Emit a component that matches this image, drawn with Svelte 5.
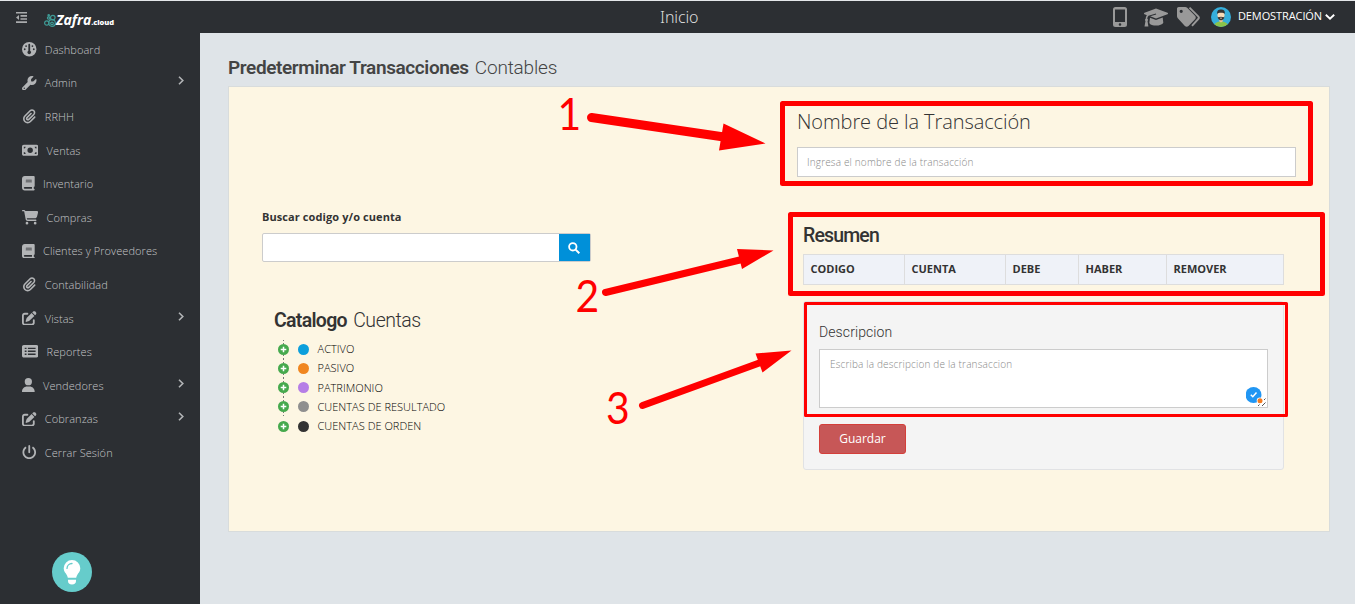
<script lang="ts">
  const paths: Record<string, string> = {
    gauge: 'M256 0a256 256 0 1 0 0 512 256 256 0 1 0 0-512zM288 96v212a64 64 0 1 1-64 0V96a32 32 0 0 1 64 0zM144 112a32 32 0 1 1 0 64 32 32 0 1 1 0-64zM96 224a32 32 0 1 1 0 64 32 32 0 1 1 0-64zM416 224a32 32 0 1 1 0 64 32 32 0 1 1 0-64zM368 112a32 32 0 1 1 0 64 32 32 0 1 1 0-64z',
    wrench: 'M352 320c88.4 0 160-71.6 160-160c0-15.3-2.2-30.1-6.2-44.2c-3.1-10.8-16.4-13.2-24.3-5.3l-76.8 76.8c-3 3-7.1 4.7-11.3 4.7H336c-8.8 0-16-7.2-16-16V118.6c0-4.2 1.7-8.3 4.7-11.3l76.8-76.8c7.9-7.9 5.4-21.2-5.3-24.3C382.1 2.2 367.3 0 352 0C263.6 0 192 71.6 192 160c0 19.1 3.4 37.5 9.5 54.5L19.9 396.1C7.2 408.8 0 426.1 0 444.1C0 481.6 30.4 512 67.9 512c18 0 35.3-7.2 48-19.9L297.5 310.5c17 6.2 35.4 9.5 54.5 9.500zM80 408a24 24 0 1 1 0 48 24 24 0 1 1 0-48z',
    clip: 'M396.2 83.8c-24.4-24.4-64-24.4-88.4 0l-184 184c-42.1 42.1-42.1 110.3 0 152.4s110.3 42.1 152.4 0l152-152c10.9-10.9 28.7-10.9 39.6 0s10.9 28.7 0 39.6l-152 152c-64 64-167.6 64-231.6 0s-64-167.6 0-231.6l184-184c46.3-46.3 121.3-46.3 167.6 0s46.3 121.3 0 167.6l-176 176c-28.6 28.6-75 28.6-103.6 0s-28.6-75 0-103.6l144-144c10.9-10.9 28.7-10.9 39.6 0s10.9 28.7 0 39.6l-144 144c-6.7 6.7-6.7 17.7 0 24.4s17.7 6.7 24.4 0l176-176c24.4-24.4 24.4-64 0-88.4z',
    money: 'M64 64C29 64 0 93 0 128v256c0 35 29 64 64 64h448c35 0 64-29 64-64V128c0-35-29-64-64-64zM64 320c35 0 64 29 64 64H64zM64 192v-64h64c0 35-29 64-64 64zM448 384c0-35 29-64 64-64v64zM512 192c-35 0-64-29-64-64h64zM288 160a96 96 0 1 1 0 192 96 96 0 1 1 0-192z',
    book: 'M96 0C43 0 0 43 0 96V416c0 53 43 96 96 96H384h32c17.7 0 32-14.3 32-32s-14.3-32-32-32V384c17.7 0 32-14.3 32-32V32c0-17.7-14.3-32-32-32H384 96zm0 384H352v64H96c-17.7 0-32-14.3-32-32s14.3-32 32-32zm32-240c0-8.8 7.2-16 16-16H336c8.8 0 16 7.2 16 16s-7.2 16-16 16H144c-8.8 0-16-7.2-16-16zm16 48H336c8.8 0 16 7.2 16 16s-7.2 16-16 16H144c-8.8 0-16-7.2-16-16s7.2-16 16-16z',
    cart: 'M0 24C0 10.7 10.7 0 24 0H69.5c22 0 41.5 12.8 50.6 32h411c26.3 0 45.5 25 38.6 50.4l-41 152.3c-8.5 31.4-37 53.3-69.5 53.3H170.7l5.4 28.5c2.2 11.3 12.1 19.5 23.6 19.5H488c13.3 0 24 10.7 24 24s-10.7 24-24 24H199.7c-34.6 0-64.3-24.6-70.7-58.5L77.4 54.5c-.7-3.8-4-6.5-7.9-6.5H24C10.7 48 0 37.3 0 24zM128 464a48 48 0 1 1 96 0 48 48 0 1 1 -96 0zm336-48a48 48 0 1 1 0 96 48 48 0 1 1 0-96z',
    edit: 'M471.6 21.7c-21.9-21.9-57.3-21.9-79.2 0L362.3 51.7l97.9 97.9 30.1-30.1c21.9-21.9 21.9-57.3 0-79.2L471.6 21.7zm-299.2 220c-6.1 6.1-10.8 13.6-13.5 21.9l-29.6 88.8c-2.9 8.6-.6 18.1 5.8 24.6s15.9 8.7 24.6 5.8l88.8-29.6c8.2-2.7 15.7-7.4 21.9-13.5L437.7 172.3 339.7 74.3 172.4 241.7zM96 64C43 64 0 107 0 160V416c0 53 43 96 96 96H352c53 0 96-43 96-96V320c0-17.7-14.3-32-32-32s-32 14.3-32 32v96c0 17.7-14.3 32-32 32H96c-17.7 0-32-14.3-32-32V160c0-17.7 14.3-32 32-32h96c17.7 0 32-14.3 32-32s-14.3-32-32-32H96z',
    list: 'M64 32C29 32 0 61 0 96v320c0 35 29 64 64 64h448c35 0 64-29 64-64V96c0-35-29-64-64-64zM96 128h64v48H96zM96 232h64v48H96zM96 336h64v48H96zM208 128h272v48H208zM208 232h272v48H208zM208 336h272v48H208z',
    user: 'M224 256A128 128 0 1 0 224 0a128 128 0 1 0 0 256zm-45.7 48C79.8 304 0 383.8 0 482.3C0 498.7 13.3 512 29.7 512H418.3c16.4 0 29.7-13.3 29.7-29.7C448 383.8 368.2 304 269.7 304H178.3z',
    power: 'M288 32c0-17.7-14.3-32-32-32s-32 14.3-32 32V256c0 17.7 14.3 32 32 32s32-14.3 32-32V32zM143.5 120.6c13.6-11.3 15.4-31.5 4.1-45.1s-31.5-15.4-45.1-4.1C49.7 115.4 16 181.8 16 256c0 132.5 107.5 240 240 240s240-107.5 240-240c0-74.2-33.8-140.6-86.6-184.6c-13.6-11.3-33.8-9.4-45.1 4.1s-9.4 33.8 4.1 45.1c38.9 32.3 63.5 81 63.5 135.4c0 97.2-78.8 176-176 176s-176-78.8-176-176c0-54.4 24.7-103.1 63.5-135.4z'
  };

  const menu = [
    { label: 'Dashboard', icon: 'gauge', w: 512 },
    { label: 'Admin', icon: 'wrench', w: 512, sub: true },
    { label: 'RRHH', icon: 'clip', w: 512 },
    { label: 'Ventas', icon: 'money', w: 576 },
    { label: 'Inventario', icon: 'book', w: 448 },
    { label: 'Compras', icon: 'cart', w: 576 },
    { label: 'Clientes y Proveedores', icon: 'book', w: 448 },
    { label: 'Contabilidad', icon: 'clip', w: 512 },
    { label: 'Vistas', icon: 'edit', w: 512, sub: true },
    { label: 'Reportes', icon: 'list', w: 576 },
    { label: 'Vendedores', icon: 'user', w: 448, sub: true },
    { label: 'Cobranzas', icon: 'edit', w: 512, sub: true },
    { label: 'Cerrar Sesión', icon: 'power', w: 512 }
  ];

  const accounts = [
    { name: 'ACTIVO', color: '#0c9fdc' },
    { name: 'PASIVO', color: '#f0861f' },
    { name: 'PATRIMONIO', color: '#b67ee6' },
    { name: 'CUENTAS DE RESULTADO', color: '#8f8f8f' },
    { name: 'CUENTAS DE ORDEN', color: '#333' }
  ];

  const columns = ['CODIGO', 'CUENTA', 'DEBE', 'HABER', 'REMOVER'];
</script>

<div class="app">
  <header>
    <svg class="collapse" width="11" height="11" viewBox="0 0 11 11" fill="#a9abad">
      <path d="M0 0h11v1.6H0zM4.5 3.1H11v1.6H4.5zM4.5 6.2H11v1.6H4.5zM0 9.3h11v1.6H0zM3 3v5L0 5.5z" />
    </svg>
    <div class="logo">
      <svg width="12" height="14" viewBox="0 0 12 14" fill="none" stroke="#3f9c97" stroke-width="1.2">
        <circle cx="2.8" cy="9" r="2.2" /><circle cx="8" cy="9" r="3.3" /><circle cx="8.8" cy="3.6" r="2.3" /><circle cx="4.6" cy="4" r="1.2" /><circle cx="4.7" cy="1.4" r=".7" /><circle cx="8" cy="9.4" r="1.3" />
      </svg>
      <b>Zafra</b><small>.cloud</small>
    </div>
    <h1>Inicio</h1>
    <div class="tools">
      <svg width="14" height="20" viewBox="0 0 14 20"><path fill="#999" fill-rule="evenodd" d="M2.5 0h9A2.5 2.5 0 0 1 14 2.5v15a2.5 2.5 0 0 1-2.5 2.5h-9A2.5 2.5 0 0 1 0 17.500v-15A2.500 2.500 0 0 1 2.500 0zM2 2.500v12.500h10V2.500zM7 16.200a1.300 1.300 0 1 0 0 2.600 1.300 1.300 0 1 0 0-2.600z" /></svg>
      <svg width="24" height="19" viewBox="0 0 24 19" fill="#999"><path d="M12 0.500 23.500 4.700c.7.300.7 1.200 0 1.500L12 10.400 6.200 8.300l6-1.800-.3-.9L4.500 7.700C3.700 8.500 3.400 9.500 3.300 10.800c1 .6.900 1.800.2 2.300l.9 5.400H.5l1-5.400c-.7-.6-.7-1.700.2-2.300.1-1.400.4-2.700 1.200-3.600L.5 6.200c-.7-.3-.7-1.200 0-1.500z" /><path d="M6 9.800l6 2.200 6.700-2.400.6 5.200c-1.600 3.700-12.500 3.700-14 .2z" /></svg>
      <svg width="24" height="20" viewBox="0 0 24 20"><path fill="#999" fill-rule="evenodd" d="M0 1.700C0 .8.700 0 1.700 0h6.500c.8 0 1.500.3 2 .8l7.800 8c1 1 1 2.500 0 3.500l-6.500 6.800c-1 1-2.600 1-3.600 0L.8 11.300c-.5-.5-.8-1.200-.8-2zM4.200 2.700a1.600 1.600 0 1 0 0 3.200 1.600 1.600 0 1 0 0-3.200z" /><path d="M12.500.7l8.700 8.700c.8.800.8 1.800 0 2.600L15 18.800" fill="none" stroke="#999" stroke-width="1.900" /></svg>
      <svg class="avatar" width="20" height="20" viewBox="0 0 20 20">
        <defs><clipPath id="face"><circle cx="10" cy="10" r="10" /></clipPath></defs>
        <g clip-path="url(#face)"><path fill="#35aedb" d="M0 0h20v20H0z" /><ellipse cx="10" cy="19.500" rx="7.500" ry="5" fill="#8bc34a" /><path fill="#e9bd91" d="M8.300 11h3.400v3.500l-1.700 1-1.700-1z" /><ellipse cx="10" cy="8.200" rx="3.500" ry="4.500" fill="#f8d9b6" /><path fill="#333" d="M6.300 7C5.500 3.800 7.500 2.400 10 2.400s4.500 1.400 3.700 4.600C13 5.200 7 5.200 6.300 7zM6.600 9.500c1 1.400 2 .2 3.400.2s2.400 1.200 3.400-.2c0 5-6.800 5-6.800 0z" /><path fill="#f8d9b6" d="M9 10.700h2v.7H9z" /></g>
      </svg>
      <span class="who">DEMOSTRACIÓN</span>
      <svg width="10" height="6" viewBox="0 0 10 6"><path d="M.8.800 5 4.700 9.200.800" fill="none" stroke="#fff" stroke-width="1.900" /></svg>
    </div>
  </header>

  <div class="body">
    <nav>
      {#each menu as item}
        <a class="item">
          <svg height="14.500" width={(item.w / 512) * 14.5} viewBox="0 0 {item.w} 512"><path fill-rule="evenodd" fill="#b2b4b6" d={paths[item.icon]} /></svg>
          <span>{item.label}</span>
          {#if item.sub}
            <svg class="chev" width="6" height="9" viewBox="0 0 6 9"><path d="M1 .8l3.800 3.700L1 8.200" fill="none" stroke="#b2b4b6" stroke-width="1.600" /></svg>
          {/if}
        </a>
      {/each}
      <button class="tip" aria-label="Ayuda">
        <svg width="18" height="25" viewBox="0 0 18 25"><path fill="#fff" d="M9 0a8.300 8.300 0 0 1 8.300 8.300c0 3.400-2 4.700-3.200 6.900-.5.900-.7 1.600-.9 2.600H4.800c-.2-1-.4-1.700-.9-2.600C2.700 13 .7 11.700.7 8.300A8.300 8.300 0 0 1 9 0zM5 19.800h8v1.300a4 3.400 0 0 1-8 0z" /><path d="M4 8.400a5 5 0 0 1 5-4.900" fill="none" stroke="#66cccb" stroke-width="1.300" stroke-linecap="round" /></svg>
      </button>
    </nav>

    <main>
      <h2 class="page-title"><b>Predeterminar Transacciones</b> <span>Contables</span></h2>
      <section class="panel">
        <div class="left">
          <label class="search-label" for="search">Buscar codigo y/o cuenta</label>
          <div class="search">
            <input id="search" />
            <button aria-label="Buscar"><svg width="12" height="12" viewBox="0 0 12 12" fill="none" stroke="#fff"><circle cx="4.800" cy="4.800" r="3.700" stroke-width="1.800" /><path d="M7.600 7.600l3.700 3.700" stroke-width="2" /></svg></button>
          </div>
          <h2 class="catalog"><b>Catalogo</b> <span>Cuentas</span></h2>
          <ul>
            {#each accounts as account}
              <li>
                <svg class="plus" width="11" height="11" viewBox="0 0 11 11"><circle cx="5.500" cy="5.500" r="5.500" fill="#46a94d" /><path d="M5.500 2.700v5.600M2.700 5.500h5.600" stroke="#fff" stroke-width="1.500" /></svg>
                <i style="background:{account.color}"></i>
                <span>{account.name}</span>
              </li>
            {/each}
          </ul>
        </div>
        <div class="right">
          <h2 class="name">Nombre de la Transacción</h2>
          <input class="name-input" placeholder="Ingresa el nombre de la transacción" />
          <div class="summary">
            <h3>Resumen</h3>
            <table>
              <thead><tr>{#each columns as column}<th>{column}</th>{/each}</tr></thead>
            </table>
            <div class="card">
              <h4>Descripcion</h4>
              <div class="area">
                <textarea placeholder="Escriba la descripcion de la transaccion"></textarea>
                <svg class="checker" width="21" height="20" viewBox="0 0 21 20">
                  <circle cx="7.500" cy="8" r="8" fill="#2196f3" /><path d="M4.800 7.700l2 2 3.700-4.200" fill="none" stroke="#fff" stroke-width="1.500" /><circle cx="14" cy="13.700" r="3.300" fill="#fff" /><circle cx="14" cy="13.700" r="2.500" fill="#f47b20" /><path d="M12 19l1.500-1.500M16 19l3.500-3.500M18 13l1.500-1.500" stroke="#555" stroke-width="1" />
                </svg>
              </div>
              <button class="save">Guardar</button>
            </div>
          </div>
        </div>
      </section>
    </main>
  </div>

  <svg class="notes" width="1355" height="604" viewBox="0 0 1355 604">
    <g fill="none" stroke="#f00" stroke-linejoin="round">
      <rect x="782.500" y="103.500" width="528" height="80" stroke-width="5" />
      <rect x="790.500" y="214.500" width="532" height="79" stroke-width="5" />
      <rect x="805.500" y="303.500" width="481" height="112" stroke-width="3" />
    </g>
    <g stroke="#f00" stroke-linecap="round">
      <path d="M591.500 117.500 724 137" stroke-width="9" />
      <path d="M605.500 292.500 744 259" stroke-width="7" />
      <path d="M642.500 405.500 762 362" stroke-width="7" />
    </g>
    <path fill="#f00" d="M723.500 123.500 765.500 143.500 719 150.500zM737 249l36.500 1.500-31.500 18.500zM755.500 353.500 791.500 350.500 762.500 372.500z" />
    <g class="digits" fill="#f00"><text transform="translate(557.500 130) scale(.93 1)">1</text><text transform="translate(575.500 312) scale(.93 1.030)">2</text><text transform="translate(606 424) scale(.93 1.030)">3</text></g>
  </svg>
</div>

<style>
  :global(body) { margin: 0; overflow: hidden; }
  * { box-sizing: border-box; }
  .app { position: relative; width: 1355px; height: 604px; display: flex; flex-direction: column; background: #dfe4e8; font-family: 'Open Sans', sans-serif; color: #333; overflow: hidden; }
  h1, h2, h3, h4, ul { margin: 0; padding: 0; font-weight: 300; }
  button { border: 0; padding: 0; }
  svg { flex: none; }
  header { height: 33px; flex: none; border-top: 1px solid #e4e7ea; background: #2c2f33; display: grid; grid-template-columns: 44px 616px 1fr auto; align-items: center; }
  .collapse { margin: 0 0 0 16px; }
  .logo { display: flex; align-items: baseline; color: #fff; padding-top: 6px; height: 28px; }
  .logo svg { align-self: flex-start; margin-top: 5px; }
  .logo b { font: italic 700 14px/20px 'Open Sans', sans-serif; padding-top: 1px; }
  .logo small { font: 800 7.500px/20px 'Open Sans', sans-serif; letter-spacing: -0.100px; }
  h1 { font: 300 16px/32px 'Noto Sans', sans-serif; color: #ddd; letter-spacing: -0.100px; }
  .tools { display: flex; align-items: center; padding-right: 20px; }
  .tools svg:nth-child(2) { margin-left: 17px; }
  .tools svg:nth-child(3) { margin-left: 9px; }
  .tools .avatar { margin-left: 10px; }
  .who { color: #fff; font-size: 11px; letter-spacing: -0.100px; margin: 0 3px 3px 7px; }
  .body { display: flex; flex: 1; }
  nav { width: 200px; background: #2c2f33; display: flex; flex-direction: column; }
  .item { height: 33.600px; flex: none; display: flex; align-items: center; padding: 0 16px 0 22px; color: #c4c6c8; font-size: 11px; letter-spacing: .070px; font-weight: 300; gap: 8.300px; }
  .item > svg:first-child { margin-bottom: 1px; }
  .item span { padding-bottom: 1px; }
  .chev { margin-left: auto; margin-bottom: 5px; }
  .tip { width: 40px; height: 40px; border-radius: 50%; background: #66cccb; margin: auto 0 12px 52px; display: grid; place-items: center; }
  main { flex: 1; padding: 22px 25px 0 28px; }
  .page-title { height: 31px; font: 300 19px/25px Roboto, sans-serif; color: #444; white-space: nowrap; }
  .page-title b { letter-spacing: -0.390px; }
  .page-title span { letter-spacing: -0.200px; margin-left: 1.500px; }
  .page-title b, .catalog b { font-weight: 600; }
  .panel { width: 1102px; height: 446px; background: #fdf6e3; border: 1px solid #d8dcdc; display: flex; }
  .left { width: 568px; padding: 121px 0 0 33px; }
  .search-label { display: block; font-size: 11px; font-weight: 700; line-height: 18px; letter-spacing: .090px; }
  .search { display: flex; width: 329px; height: 29px; margin-top: 7px; border: 1px solid #ccc; border-radius: 2px; background: #fff; }
  .search input { flex: 1; border: 0; background: none; min-width: 0; }
  .search button { width: 31px; background: #0090d9; display: grid; place-items: center; }
  .search button svg { margin-right: 1px; }
  .catalog { margin: 45px 0 0 12px; font: 300 19.500px/28px Roboto, sans-serif; white-space: nowrap; }
  .catalog b { letter-spacing: -0.700px; }
  .catalog span { letter-spacing: -0.450px; margin-left: 1.500px; }
  ul { list-style: none; margin: 4.700px 0 0 16px; }
  li { display: flex; align-items: center; height: 19.200px; font-size: 11px; font-weight: 300; color: #000; background: linear-gradient(#777 50%, transparent 50%) 5px 0 / 1px 3px repeat-y; }
  li:last-child { background: none; }
  li i { width: 11px; height: 11px; border-radius: 50%; margin: 0 8.500px 0 9px; }
  li span { letter-spacing: .020px; padding-bottom: 1px; }
  .right { width: 499px; padding-top: 18px; }
  .name { font: 300 20px/34px 'Open Sans', sans-serif; letter-spacing: -0.080px; }
  input, textarea { font: 300 10px 'Open Sans', sans-serif; outline: 0; letter-spacing: .170px; }
  ::placeholder { color: #888; opacity: 1; }
  .name-input { display: block; width: 499px; height: 30px; margin-top: 8px; border: 1px solid #ccc; padding: 0 10px 1px 9px; }
  .summary { padding-left: 6px; width: 487px; margin-top: 45px; }
  h3 { font: 500 19.500px/28px Roboto, sans-serif; letter-spacing: -0.850px; }
  table { margin-top: 4px; width: 481px; height: 31px; border-collapse: collapse; table-layout: fixed; background: #eff2f8; }
  th { border: 1px solid #ddd; padding: 0 6.500px 2px; font-size: 11px; font-weight: 700; text-align: left; }
  th:nth-child(1), th:nth-child(2) { width: 101px; }
  th:nth-child(3) { width: 73px; }
  th:nth-child(4) { width: 88px; }
  .card { width: 481px; height: 169px; margin-top: 16px; background: #f4f4f4; border: 1px solid #e1e2e4; border-radius: 3px; padding: 18px 15px 0; }
  h4 { font: 300 14px/24px Roboto, sans-serif; letter-spacing: .100px; }
  .area { position: relative; height: 60px; margin-top: 5px; }
  textarea { display: block; width: 449px; height: 59px; border: 1px solid #ccc; resize: none; padding: 7px 10px; }
  .checker { position: absolute; right: 1px; bottom: 2px; }
  .save { display: block; width: 87px; height: 30px; margin-top: 15px; border: 1px solid #d43f3a; border-radius: 3px; background: #c75757; color: #fff; font: 400 12px 'Open Sans', sans-serif; padding-bottom: 1px; }
  .notes { position: absolute; inset: 0; pointer-events: none; }
  .digits { font: 400 44px Lato, sans-serif; }
</style>
